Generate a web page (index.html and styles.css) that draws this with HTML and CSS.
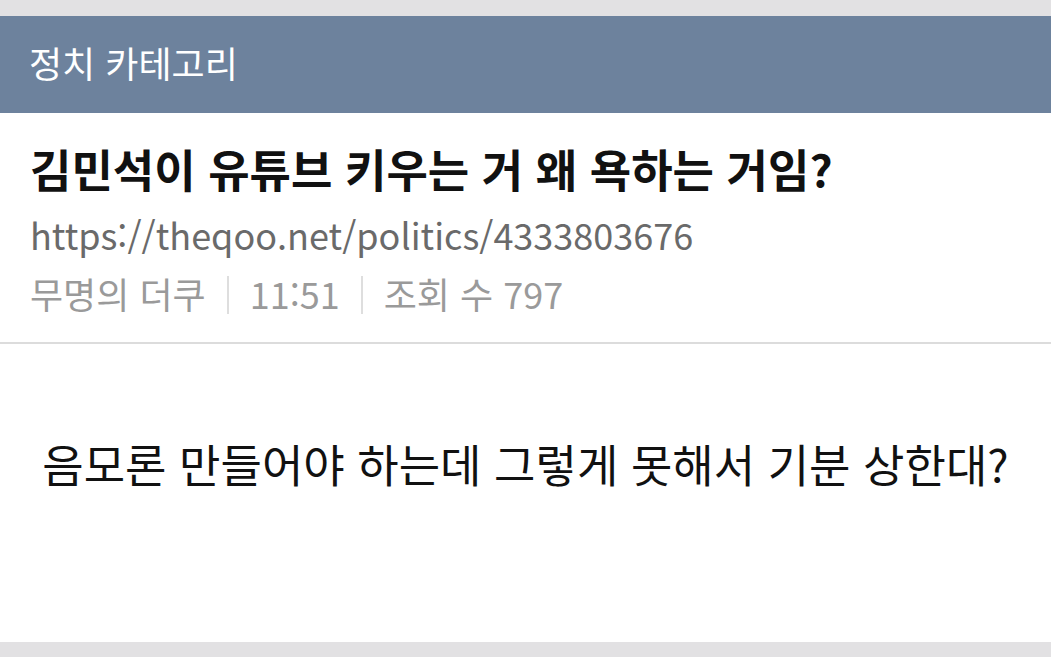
FILE: index.html
```html
<!DOCTYPE html>
<html lang="ko">
<head>
<meta charset="utf-8">
<link rel="stylesheet" href="styles.css">
</head>
<body>
<div class="page">
  <div class="topbar"></div>
  <header class="cat">정치 카테고리</header>
  <section class="post-head">
    <h1 class="title">김민석이 유튜브 키우는 거 왜 욕하는 거임?</h1>
    <div class="url">https://theqoo.net/politics/4333803676</div>
    <div class="meta">
      <span>무명의 더쿠</span>
      <span class="sep"></span>
      <span>11:51</span>
      <span class="sep"></span>
      <span>조회 수 797</span>
    </div>
  </section>
  <main class="content">
    <p class="body-text">음모론 만들어야 하는데 그렇게 못해서 기분 상한대?</p>
  </main>
  <div class="bottombar"></div>
</div>
</body>
</html>
```
FILE: styles.css
```css
html, body {
  margin: 0;
  padding: 0;
  background: #e2e1e3;
}
body {
  font-family: "Noto Sans CJK KR", "Noto Sans", sans-serif;
  width: 1051px;
  height: 657px;
  overflow: hidden;
}
.page {
  display: flex;
  flex-direction: column;
  height: 657px;
}
.topbar {
  height: 16px;
  background: #e2e1e3;
  flex: none;
}
.cat {
  flex: none;
  height: 97px;
  background: #6d829d;
  color: #fff;
  font-size: 36px;
  display: flex;
  align-items: center;
  padding-left: 29px;
  box-sizing: border-box;
  padding-bottom: 6px;
}
.post-head {
  flex: none;
  background: #fff;
  padding: 24px 30px 0;
  height: 231px;
  box-sizing: border-box;
  border-bottom: 2px solid #dcdcdc;
}
.title {
  margin: 0;
  font-size: 45px;
  font-weight: 700;
  color: #111;
  line-height: 64px;
}
.url {
  font-size: 36px;
  color: #6a6a6a;
  line-height: 66px;
}
.meta {
  display: flex;
  align-items: center;
  font-size: 36px;
  color: #9a9a9a;
  line-height: 52px;
}
.sep {
  width: 2px;
  height: 38px;
  background: #dedede;
  margin: 4px 21px 0;
}
.content {
  flex: none;
  background: #fff;
  height: 298px;
  display: flex;
  justify-content: center;
  padding-top: 90px;
  box-sizing: border-box;
}
.body-text {
  margin: 0;
  font-size: 45px;
  color: #111;
  line-height: 60px;
}
.bottombar {
  flex: 1;
  background: #e2e1e3;
}
```
